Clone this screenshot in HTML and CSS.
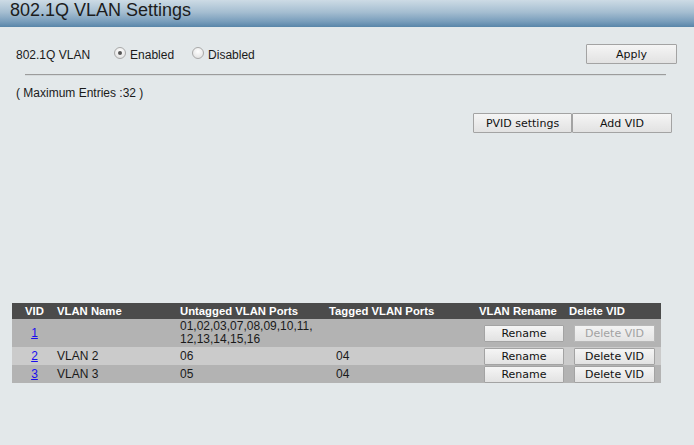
FILE: index.html
```html
<!DOCTYPE html>
<html>
<head>
<meta charset="utf-8">
<link rel="stylesheet" href="styles.css">
</head>
<body>
<div class="titlebar"><h1 class="title">802.1Q VLAN Settings</h1></div>
<div class="content">
  <div class="setting-row">
    <span class="label">802.1Q VLAN</span>
    <label class="radio first"><span class="dot checked"></span>Enabled</label>
    <label class="radio second"><span class="dot"></span>Disabled</label>
    <button class="btn apply">Apply</button>
  </div>
  <div class="divider"></div>
  <p class="max">( Maximum Entries :32 )</p>
  <div class="actions">
    <button class="btn pvid">PVID settings</button><button class="btn addvid">Add VID</button>
  </div>
  <table class="vlan">
    <colgroup>
      <col class="c-vid"><col class="c-name"><col class="c-untag"><col class="c-tag"><col class="c-ren"><col class="c-del">
    </colgroup>
    <thead>
      <tr><th class="center">VID</th><th>VLAN Name</th><th>Untagged VLAN Ports</th><th>Tagged VLAN Ports</th><th>VLAN Rename</th><th>Delete VID</th></tr>
    </thead>
    <tbody>
      <tr class="dark tall">
        <td class="center"><a href="#">1</a></td>
        <td></td>
        <td class="ports">01,02,03,07,08,09,10,11,<br>12,13,14,15,16</td>
        <td class="tag"></td>
        <td class="btncell"><button class="btn small">Rename</button></td>
        <td class="btncell"><button class="btn small del" disabled>Delete VID</button></td>
      </tr>
      <tr class="light">
        <td class="center"><a href="#">2</a></td>
        <td>VLAN 2</td>
        <td>06</td>
        <td class="tag">04</td>
        <td class="btncell"><button class="btn small">Rename</button></td>
        <td class="btncell"><button class="btn small del">Delete VID</button></td>
      </tr>
      <tr class="dark">
        <td class="center"><a href="#">3</a></td>
        <td>VLAN 3</td>
        <td>05</td>
        <td class="tag">04</td>
        <td class="btncell"><button class="btn small">Rename</button></td>
        <td class="btncell"><button class="btn small del">Delete VID</button></td>
      </tr>
    </tbody>
  </table>
</div>
</body>
</html>
```

FILE: styles.css
```css
html, body {
  margin: 0;
  padding: 0;
  background: #e3e8ea;
  font-family: "Liberation Sans", Arial, sans-serif;
  font-size: 12px;
  color: #1a1a1a;
}

.titlebar {
  height: 27px;
  background: linear-gradient(to bottom, #cddbe5 0%, #a5bed1 45%, #789dbb 80%, #5885a9 100%);
}

.title {
  margin: 0;
  padding-left: 10px;
  font-size: 18px;
  font-weight: normal;
  line-height: 21px;
  color: #1c1c1c;
}

.content {
  padding-top: 17px;
}

.setting-row {
  display: flex;
  align-items: center;
  height: 20px;
  padding-left: 16px;
  padding-right: 17px;
}

.label {
  line-height: 14px;
  margin-top: 1px;
}

.radio {
  display: flex;
  align-items: center;
  line-height: 14px;
  margin-top: 1px;
}

.radio.first {
  margin-left: 24px;
}

.radio.second {
  margin-left: 18px;
}

.dot {
  width: 10px;
  height: 10px;
  border: 1px solid #a9a9a9;
  border-radius: 50%;
  background: radial-gradient(circle at 50% 35%, #ffffff, #dcdcdc);
  margin-right: 4px;
  margin-top: -4px;
  display: flex;
  align-items: center;
  justify-content: center;
}

.dot.checked::after {
  content: "";
  width: 4px;
  height: 4px;
  border-radius: 50%;
  background: #555;
}

.btn {
  font-family: "DejaVu Sans", Tahoma, sans-serif;
  font-size: 11px;
  color: #111;
  background: linear-gradient(to bottom, #f5f5f5, #e2e2e2);
  border: 1px solid #a3a3a3;
  border-radius: 1px;
  padding: 0;
  box-sizing: border-box;
}

.apply {
  margin-left: auto;
  width: 91px;
  height: 20px;
}

.divider {
  margin: 10px 28px 0 25px;
  height: 1px;
  background: #9c9c9c;
  border-bottom: 1px solid #d6dbdd;
}

.max {
  margin: 10px 0 0 16px;
  line-height: 14px;
}

.actions {
  display: flex;
  justify-content: flex-end;
  margin-top: 13px;
  padding-right: 22px;
}

.pvid {
  width: 99px;
  height: 20px;
}

.addvid {
  width: 100px;
  height: 20px;
}

.vlan {
  margin: 170px 0 0 12px;
  width: 649px;
  table-layout: fixed;
  border-collapse: collapse;
  border-spacing: 0;
}

.c-vid { width: 45px; }
.c-name { width: 123px; }
.c-untag { width: 149px; }
.c-tag { width: 150px; }
.c-ren { width: 90px; }
.c-del { width: 92px; }

.vlan th {
  background: #4b4b4b;
  color: #ffffff;
  font-weight: bold;
  font-size: 11.3px;
  text-align: left;
  padding: 0;
  height: 16px;
  line-height: 14px;
  white-space: nowrap;
}

.vlan td {
  padding: 0;
  height: 18px;
  line-height: 14px;
  vertical-align: middle;
  white-space: nowrap;
}

.vlan tr.tall td {
  height: 28px;
}

.vlan td.ports {
  line-height: 13px;
}

.vlan .center {
  text-align: center;
}

.vlan td.tag {
  padding-left: 7px;
}

.vlan td.btncell {
  padding-left: 5px;
  line-height: 0;
}

.dark td { background: #b3b3b3; }
.light td { background: #cbcbcb; }

.vlan a {
  color: #1a0dee;
  text-decoration: underline;
}

.small {
  height: 17px;
  width: 80px;
  line-height: 15px;
  vertical-align: middle;
}

.small.del {
  width: 81px;
}

.small:disabled {
  color: #a2a2a2;
  background: linear-gradient(to bottom, #f3f3f3, #e4e4e4);
  border-color: #b8b8b8;
}
```
